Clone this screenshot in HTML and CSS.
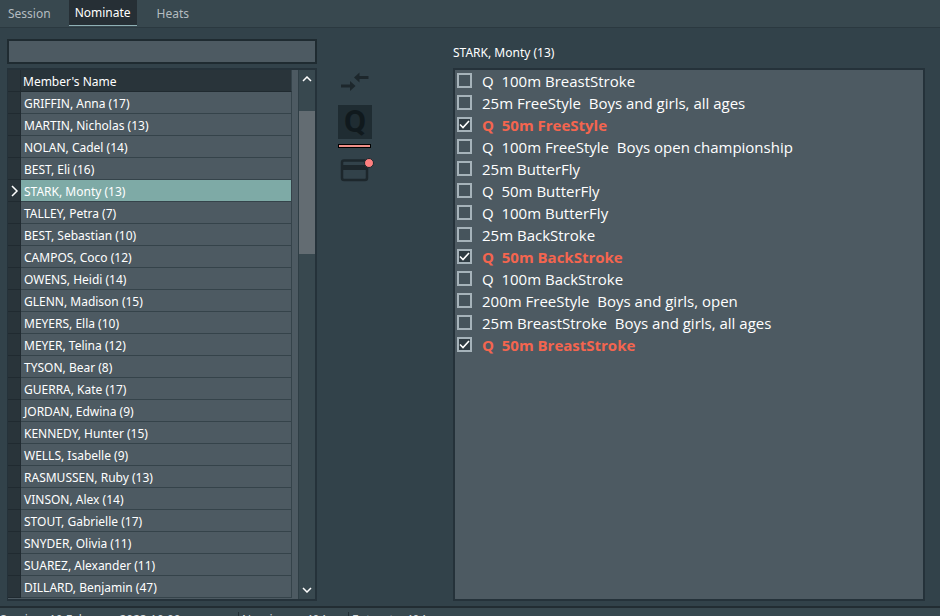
FILE: index.html
```html
<!DOCTYPE html>
<html lang="en">
<head>
<meta charset="utf-8">
<title>Nominate</title>
<link rel="stylesheet" href="styles.css">
</head>
<body>
<div class="app">
  <nav class="tabs">
    <a href="#session" class="tab">Session</a>
    <a href="#nominate" class="tab tab-active" aria-current="page">Nominate</a>
    <a href="#heats" class="tab">Heats</a>
  </nav>
  <main class="content">
    <section class="members">
      <input class="search" type="text" aria-label="Search members">
      <div class="grid-box">
        <div class="table-clip">
          <table class="table">
            <thead><tr><th class="mark"></th><th class="name" scope="col">Member's Name</th></tr></thead>
            <tbody>
              <tr><td class="mark"></td><td class="name">GRIFFIN, Anna (17)</td></tr>
              <tr><td class="mark"></td><td class="name">MARTIN, Nicholas (13)</td></tr>
              <tr><td class="mark"></td><td class="name">NOLAN, Cadel (14)</td></tr>
              <tr><td class="mark"></td><td class="name">BEST, Eli (16)</td></tr>
              <tr class="selected"><td class="mark"><svg width="12" height="14" viewBox="0 0 12 14"><path d="M4 1l5 5-5 5" /></svg></td><td class="name">STARK, Monty (13)</td></tr>
              <tr><td class="mark"></td><td class="name">TALLEY, Petra (7)</td></tr>
              <tr><td class="mark"></td><td class="name">BEST, Sebastian (10)</td></tr>
              <tr><td class="mark"></td><td class="name">CAMPOS, Coco (12)</td></tr>
              <tr><td class="mark"></td><td class="name">OWENS, Heidi (14)</td></tr>
              <tr><td class="mark"></td><td class="name">GLENN, Madison (15)</td></tr>
              <tr><td class="mark"></td><td class="name">MEYERS, Ella (10)</td></tr>
              <tr><td class="mark"></td><td class="name">MEYER, Telina (12)</td></tr>
              <tr><td class="mark"></td><td class="name">TYSON, Bear (8)</td></tr>
              <tr><td class="mark"></td><td class="name">GUERRA, Kate (17)</td></tr>
              <tr><td class="mark"></td><td class="name">JORDAN, Edwina (9)</td></tr>
              <tr><td class="mark"></td><td class="name">KENNEDY, Hunter (15)</td></tr>
              <tr><td class="mark"></td><td class="name">WELLS, Isabelle (9)</td></tr>
              <tr><td class="mark"></td><td class="name">RASMUSSEN, Ruby (13)</td></tr>
              <tr><td class="mark"></td><td class="name">VINSON, Alex (14)</td></tr>
              <tr><td class="mark"></td><td class="name">STOUT, Gabrielle (17)</td></tr>
              <tr><td class="mark"></td><td class="name">SNYDER, Olivia (11)</td></tr>
              <tr><td class="mark"></td><td class="name">SUAREZ, Alexander (11)</td></tr>
              <tr><td class="mark"></td><td class="name">DILLARD, Benjamin (47)</td></tr>
            </tbody>
          </table>
        </div>
        <div class="scrollbar">
          <button class="arrow" type="button" aria-label="Scroll up"><svg width="10" height="6" viewBox="0 0 10 6"><path d="M1 5l4-4 4 4"/></svg></button>
          <div class="track"><div class="thumb"></div></div>
          <button class="arrow" type="button" aria-label="Scroll down"><svg width="10" height="6" viewBox="0 0 10 6"><path d="M1 1l4 4 4-4"/></svg></button>
        </div>
      </div>
    </section>
    <div class="tools">
      <button class="tool" type="button" aria-label="Transfer nominations">
        <svg width="34" height="34" viewBox="0 0 34 34"><path class="ink" d="M20 12.500h10.500M3 21h10" /><path class="solid" d="M16 12.500l5.500-5v10zM17.500 21l-5.500-5v10z"/></svg>
      </button>
      <button class="tool tool-on" type="button" aria-label="Qualified only">Q</button>
      <span class="bar"></span>
      <button class="tool" type="button" aria-label="Payment card">
        <svg width="36" height="34" viewBox="0 0 36 34"><rect class="card" x="4" y="9.500" width="25" height="19.500" rx="2"/><path class="solid" d="M3 14h26v5H3z"/><circle class="dot" cx="31" cy="12" r="4.500"/></svg>
      </button>
    </div>
    <section class="events">
      <h1 class="title">STARK, Monty (13)</h1>
      <div class="event-list">
        <label class="event"><input type="checkbox"><span>Q&nbsp; 100m BreastStroke</span></label>
        <label class="event"><input type="checkbox"><span>25m FreeStyle&nbsp; Boys and girls, all ages</span></label>
        <label class="event"><input type="checkbox" checked><span>Q&nbsp; 50m FreeStyle</span></label>
        <label class="event"><input type="checkbox"><span>Q&nbsp; 100m FreeStyle&nbsp; Boys open championship</span></label>
        <label class="event"><input type="checkbox"><span>25m ButterFly</span></label>
        <label class="event"><input type="checkbox"><span>Q&nbsp; 50m ButterFly</span></label>
        <label class="event"><input type="checkbox"><span>Q&nbsp; 100m ButterFly</span></label>
        <label class="event"><input type="checkbox"><span>25m BackStroke</span></label>
        <label class="event"><input type="checkbox" checked><span>Q&nbsp; 50m BackStroke</span></label>
        <label class="event"><input type="checkbox"><span>Q&nbsp; 100m BackStroke</span></label>
        <label class="event"><input type="checkbox"><span>200m FreeStyle&nbsp; Boys and girls, open</span></label>
        <label class="event"><input type="checkbox"><span>25m BreastStroke&nbsp; Boys and girls, all ages</span></label>
        <label class="event"><input type="checkbox" checked><span>Q&nbsp; 50m BreastStroke</span></label>
      </div>
    </section>
  </main>
  <footer class="status">
    <span class="cell cell-wide">Session: 19 February 2023 10:00</span>
    <span class="cell">Nominees: 404</span>
    <span class="cell">Entrants: 404</span>
  </footer>
</div>
</body>
</html>
```
FILE: styles.css
```css
* { box-sizing: border-box; }
body {
  margin: 0;
  background: #32424a;
  color: #fff;
  font: 12px/16px "Noto Sans", sans-serif;
}
button { padding: 0; border: 0; background: none; font: inherit; color: inherit; }
svg { display: block; fill: none; }
.app { display: flex; flex-direction: column; height: 100vh; overflow: hidden; }

.tabs {
  display: flex;
  flex: none;
  gap: 12px;
  height: 28px;
  padding-left: 2px;
  background: #38484f;
  border-bottom: 1px solid #2b3940;
}
.tab {
  height: 26px;
  padding: 0 6px;
  line-height: 27px;
  color: #b4bcc0;
  text-decoration: none;
}
.tab-active {
  background: #262f35;
  border-bottom: 1px solid #8fb0b5;
  color: #fff;
  line-height: 25px;
}
.tab-active + .tab { padding-left: 8px; }

.content { display: flex; flex: 1; min-height: 0; padding: 11px 15px 5px 7px; }
.members { display: flex; flex-direction: column; width: 310px; }
.search {
  flex: none;
  height: 25px;
  margin-bottom: 4px;
  padding: 0 6px;
  border: 2px solid #1f2b31;
  background: #4d5a62;
  color: #fff;
  font: inherit;
}
.grid-box {
  display: flex;
  flex: 1;
  min-height: 0;
  border: 2px solid #25323a;
  border-left-width: 1px;
  background: #4d5a62;
}
.table-clip { flex: 1; overflow: hidden; padding-right: 6px; }
.table { width: 100%; border-collapse: separate; border-spacing: 0; table-layout: fixed; }
.table th, .table td {
  height: 22px;
  padding: 3px 0 0;
  border-bottom: 1px solid #35434a;
  text-align: left;
  font-weight: 400;
  line-height: 18px;
}
.table .mark { width: 13px; background: #29343a; border-right: 1px solid #222c32; border-bottom-color: #202a30; }
.table .name { padding-left: 3px; border-right: 1px solid #35434a; }
.table th.name { padding-left: 2px; background: #29343a; border-bottom-color: #202a30; }
.table .selected .name { background: #7eaaa6; }
.mark svg { stroke: #fff; stroke-width: 1.5; }
.scrollbar { display: flex; flex-direction: column; width: 17px; background: #38484f; border-left: 1px solid #2f3e45; }
.arrow { display: grid; place-items: center; height: 18px; }
.arrow svg { stroke: #fff; stroke-width: 1.5; }
.track { flex: 1; padding: 23px 0; }
.thumb { height: 32%; background: #636c72; }

.tools { display: flex; flex-direction: column; align-items: flex-start; width: 136px; padding: 26px 0 0 20px; }
.tool { display: grid; place-items: center; width: 34px; height: 34px; margin-left: 1px; }
.tool svg { overflow: visible; }
.tool-on { margin-top: 6px; padding-bottom: 2px; background: #1f2c32; color: #10191d; font: 700 32px/32px Roboto, sans-serif; }
.bar { width: 33px; height: 4px; margin: 5px 0 3px 1px; border: 1px solid #000; background: #f08f88; }
.ink { stroke: #1d272c; stroke-width: 3; }
.solid { fill: #1d272c; }
.card { stroke: #1d272c; stroke-width: 2.5; }
.dot { fill: #ff8080; stroke: #1d272c; }

.events { display: flex; flex: 1; flex-direction: column; min-width: 0; }
.title { margin: 5px 0 7px; font-size: 12px; font-weight: 400; line-height: 17px; }
.event-list {
  flex: 1;
  min-height: 0;
  padding: 0 2px;
  overflow: hidden;
  border: 2px solid #25323a;
  background: #4d5a62;
  font: 15px/22px "Open Sans", sans-serif;
}
.event { display: flex; align-items: center; gap: 10px; height: 22px; white-space: nowrap; }
.event input {
  appearance: none;
  width: 15px;
  height: 15px;
  margin: 0 0 2px;
  border: 2px solid #a6b3ba;
  background: #46545c;
}
.event input:checked { background: #2f3b42 url("data:image/svg+xml,%3Csvg xmlns='http://www.w3.org/2000/svg' viewBox='0 0 11 11'%3E%3Cpath d='M1 5.500 4 8.500 10 2' fill='none' stroke='white' stroke-width='1.600'/%3E%3C/svg%3E"); }
.event input:checked + span { color: #f4654f; font-weight: 700; }

.status {
  display: flex;
  flex: none;
  height: 10px;
  padding-top: 4px;
  border-top: 2px solid #222d33;
  overflow: hidden;
  background: #38484f;
  color: #d5dadd;
}
.cell { flex: none; width: 110px; padding-left: 3px; border-left: 1px solid #222d33; }
.cell-wide { width: 238px; padding-left: 0; border-left: 0; }
```
